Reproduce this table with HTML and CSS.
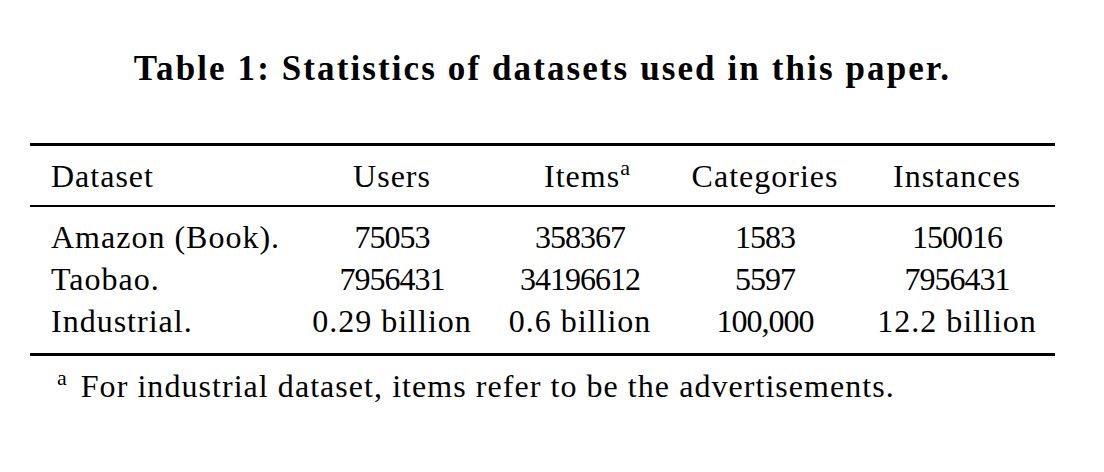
FILE: index.html
```html
<!DOCTYPE html>
<html>
<head>
<meta charset="utf-8">
<link rel="stylesheet" href="styles.css">
</head>
<body>
<div class="page">
  <h1 class="caption">Table 1: Statistics of datasets used in this paper.</h1>
  <table class="stats">
    <thead>
      <tr>
        <th class="c-name">Dataset</th>
        <th class="c-users">Users</th>
        <th class="c-items head-items">Items<sup class="fn">a</sup></th>
        <th class="c-cat">Categories</th>
        <th class="c-inst">Instances</th>
      </tr>
    </thead>
    <tbody>
      <tr class="first">
        <td class="c-name">Amazon (Book).</td>
        <td class="c-users num">75053</td>
        <td class="c-items num">358367</td>
        <td class="c-cat num">1583</td>
        <td class="c-inst num">150016</td>
      </tr>
      <tr>
        <td class="c-name">Taobao.</td>
        <td class="c-users num">7956431</td>
        <td class="c-items num">34196612</td>
        <td class="c-cat num">5597</td>
        <td class="c-inst num">7956431</td>
      </tr>
      <tr class="last">
        <td class="c-name">Industrial.</td>
        <td class="c-users">0.29 billion</td>
        <td class="c-items">0.6 billion</td>
        <td class="c-cat num">100,000</td>
        <td class="c-inst">12.2 billion</td>
      </tr>
    </tbody>
  </table>
  <p class="note"><sup class="fn-note">a</sup><span class="note-text">For industrial dataset, items refer to be the advertisements.</span></p>
</div>
</body>
</html>
```

FILE: styles.css
```css
html, body {
  margin: 0;
  padding: 0;
  background: #ffffff;
}

body {
  font-family: "Liberation Serif", "Times New Roman", serif;
  color: #000000;
}

.page {
  width: 1025px;
  padding-left: 30px;
  padding-top: 49px;
}

.caption {
  margin: 0;
  font-size: 35px;
  font-weight: bold;
  line-height: 40px;
  letter-spacing: 2.1px;
  text-align: center;
}

.stats {
  margin-top: 54px;
  width: 1025px;
  border-collapse: collapse;
  table-layout: fixed;
  font-size: 32px;
  letter-spacing: 1px;
  border-top: 3px solid #000;
  border-bottom: 3px solid #000;
}

.stats th,
.stats td {
  box-sizing: border-box;
  font-weight: normal;
  padding: 0;
  white-space: nowrap;
  text-align: center;
}

.stats thead th {
  height: 61px;
  padding-top: 3px;
  border-bottom: 2px solid #000;
  vertical-align: middle;
}

.stats thead th.head-items {
  padding-left: 14px;
}

.stats tbody td {
  height: 42px;
  line-height: 42px;
}

.stats tbody tr.first td {
  padding-top: 9px;
}

.stats tbody tr.last td {
  padding-bottom: 11px;
}

.stats .num {
  letter-spacing: -1px;
}

.c-name {
  width: 270px;
  text-align: left !important;
  padding-left: 21px !important;
}

.c-users { width: 184px; }
.c-items { width: 192px; }
.c-cat { width: 178px; }
.c-inst { width: 201px; padding-left: 5px !important; }

.fn {
  font-size: 22px;
  vertical-align: 12px;
  line-height: 0;
  letter-spacing: 0;
}

.note {
  margin: 10px 0 0 27px;
  font-size: 32px;
  line-height: 40px;
}

.fn-note {
  font-size: 22px;
  vertical-align: 12px;
  line-height: 0;
  margin-right: 14px;
}

.note-text {
  letter-spacing: 1.05px;
}
```
